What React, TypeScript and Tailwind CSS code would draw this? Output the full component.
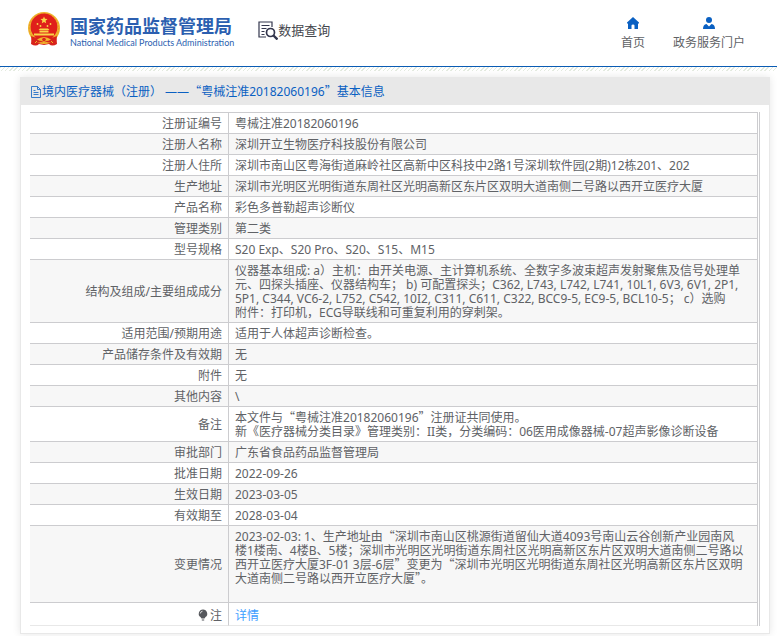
import type { ReactNode } from "react";

type Row = {
  label: string;
  value: string;
};

const rows: Row[] = [
  { label: "注册证编号", value: "粤械注准20182060196" },
  { label: "注册人名称", value: "深圳开立生物医疗科技股份有限公司" },
  { label: "注册人住所", value: "深圳市南山区粤海街道麻岭社区高新中区科技中2路1号深圳软件园(2期)12栋201、202" },
  { label: "生产地址", value: "深圳市光明区光明街道东周社区光明高新区东片区双明大道南侧二号路以西开立医疗大厦" },
  { label: "产品名称", value: "彩色多普勒超声诊断仪" },
  { label: "管理类别", value: "第二类" },
  { label: "型号规格", value: "S20 Exp、S20 Pro、S20、S15、M15" },
  {
    label: "结构及组成/主要组成成分",
    value:
      "仪器基本组成: a）主机：由开关电源、主计算机系统、全数字多波束超声发射聚焦及信号处理单\n元、四探头插座、仪器结构车； b) 可配置探头；C362, L743, L742, L741, 10L1, 6V3, 6V1, 2P1,\n5P1, C344, VC6-2, L752, C542, 10I2, C311, C611, C322, BCC9-5, EC9-5, BCL10-5； c）选购\n附件：打印机，ECG导联线和可重复利用的穿刺架。",
  },
  { label: "适用范围/预期用途", value: "适用于人体超声诊断检查。" },
  { label: "产品储存条件及有效期", value: "无" },
  { label: "附件", value: "无" },
  { label: "其他内容", value: "\\" },
  {
    label: "备注",
    value:
      "本文件与“粤械注准20182060196”注册证共同使用。\n新《医疗器械分类目录》管理类别：II类，分类编码：06医用成像器械-07超声影像诊断设备",
  },
  { label: "审批部门", value: "广东省食品药品监督管理局" },
  { label: "批准日期", value: "2022-09-26" },
  { label: "生效日期", value: "2023-03-05" },
  { label: "有效期至", value: "2028-03-04" },
  {
    label: "变更情况",
    value:
      "2023-02-03: 1、生产地址由“深圳市南山区桃源街道留仙大道4093号南山云谷创新产业园南风\n楼1楼南、4楼B、5楼；深圳市光明区光明街道东周社区光明高新区东片区双明大道南侧二号路以\n西开立医疗大厦3F-01 3层-6层”变更为“深圳市光明区光明街道东周社区光明高新区东片区双明\n大道南侧二号路以西开立医疗大厦”。\n\n",
  },
];

// Curly quotes are full width in Chinese text, so they take the CJK font
const CnText = ({ children }: { children: string }) => (
  <>
    {children.split(/([“”])/).map((part, i) =>
      part === "“" || part === "”" ? (
        <span key={i} className="font-['Noto_Sans_CJK_SC',sans-serif] leading-none">
          {part}
        </span>
      ) : (
        part
      )
    )}
  </>
);

const Emblem = () => (
  <svg viewBox="0 0 34 36" className="w-[34px] h-9 shrink-0" aria-hidden="true">
    <path d="M5 23 L4 33 Q9 36 12 33 L17 34 L22 33 Q25 36 30 33 L29 23 Z" fill="#d8231c" />
    <circle cx="17" cy="17" r="16" fill="#f0b62c" />
    <circle cx="17" cy="17" r="14.6" fill="none" stroke="#e9982a" strokeWidth="1" strokeDasharray="2 1.4" />
    <circle cx="17" cy="16" r="13.4" fill="#e0201b" />
    <path d="M17 5.500l1 2.300 2.500.2-1.900 1.700.6 2.500-2.200-1.300-2.200 1.300.6-2.500-1.900-1.700 2.500-.2z" fill="#f8d648" />
    <g fill="#f8d648">
      <circle cx="10.500" cy="13" r=".9" />
      <circle cx="13.500" cy="15" r=".9" />
      <circle cx="20.500" cy="15" r=".9" />
      <circle cx="23.500" cy="13" r=".9" />
      <path d="M11.500 19l1.500-1.500h8l1.500 1.500zM12.500 19.500h9v2h-9zM7 22.500h20v2H7z" />
    </g>
    <path d="M4 25q7 3 13 0q6 3 13 0l-1 6q-6 2-12-1q-6 3-12 1z" fill="#d8231c" />
    <path d="M10 28.500q3.500-2.500 7-2.500t7 2.500q-3 2-7 1.500q-4 .5-7-1.500z" fill="#f0b62c" />
    <circle cx="17" cy="28.500" r="1.800" fill="#d8231c" />
    <path d="M8 32l2-2M26 32l-2-2" stroke="#f0b62c" />
  </svg>
);

const SearchDocIcon = () => (
  <svg viewBox="0 0 20 20" className="w-5 h-5 shrink-0" fill="none" stroke="#33364d" aria-hidden="true">
    <path d="M14 7V2H1V17H8" strokeWidth="1.200" />
    <path d="M3.500 5.500h8M3.500 8.500h5M3.500 11.500h3M3.500 14.500h3" strokeWidth="1" />
    <circle cx="12.500" cy="12.500" r="4" strokeWidth="1.700" />
    <path d="M15.500 15.500L19.500 19.500" strokeWidth="2.400" />
  </svg>
);

const HomeIcon = () => (
  <svg viewBox="0 0 12 12" className="w-3 h-3" fill="#0a60c2" aria-hidden="true">
    <path d="M6 0L0 5.500V6.500H1V12H4.500V8.500Q4.500 7.500 6 7.500T7.500 8.500V12H11V6.500H12V5.500z" />
  </svg>
);

const UserIcon = () => (
  <svg viewBox="0 0 12 12" className="w-3 h-3" fill="#0a60c2" aria-hidden="true">
    <circle cx="6" cy="3" r="3" />
    <path d="M3.500 7L6 9.500L8.500 7Q12 7.500 12 12H0Q0 7.500 3.500 7z" />
  </svg>
);

const DocIcon = () => (
  <svg viewBox="0 0 12 12" className="w-3 h-3 shrink-0" fill="none" stroke="#0a60c2" strokeWidth=".8" aria-hidden="true">
    <path d="M1.500 .5H7.500L10.500 3.500V11.500H1.500zM7.500 .5V3.500H10.500M3.500 4.500H5.500M3.500 6.500H8.500M3.500 8.500H8.500" />
  </svg>
);

const BulbIcon = () => (
  <svg viewBox="0 0 10 12" className="w-[10px] h-3 inline-block align-[-1px]" aria-hidden="true">
    <path d="M5 0.500a4.200 4.200 0 0 1 2.500 7.600L6.500 9.500h-3L2.500 8.100A4.200 4.200 0 0 1 5 .5zM3.800 10.500h2.400v1H3.800z" fill="#55575c" />
    <path d="M2.300 4.500Q2.500 2.500 4.500 2.200" fill="none" stroke="#fff" strokeWidth=".8" />
  </svg>
);

const NavLink = ({ icon, label }: { icon: ReactNode; label: string }) => (
  <a href="#" className="flex flex-col items-center gap-1 text-xs leading-5 text-[#606266]">
    {icon}
    {label}
  </a>
);

const cell = "border-b border-[#cccccf] pt-1 pb-0.5 px-1.5";

const App = () => {
  return (
    <div className="bg-white font-['Noto_Sans','Noto_Sans_CJK_SC',sans-serif] text-[#606266]">
      <header className="flex items-start justify-between border-b border-[#0a5cb4] pl-[27px] pr-8 h-[67px]">
        <div className="flex items-start">
          <a href="#" className="flex items-start gap-[9px] pt-[11px] text-[#2c5fb0]">
            <Emblem />
            <span className="flex flex-col whitespace-nowrap pt-1">
              <span className="text-lg leading-[22px] font-bold">国家药品监督管理局</span>
              <span className="font-['Lato',sans-serif] text-[9px] leading-3">
                National Medical Products Administration
              </span>
            </span>
          </a>
          <a href="#" className="flex items-center pt-5 pl-6 text-[13px] leading-5 text-[#45474d] whitespace-nowrap">
            <SearchDocIcon />
            数据查询
          </a>
        </div>
        <nav className="flex gap-7 pt-[17px] whitespace-nowrap">
          <NavLink icon={<HomeIcon />} label="首页" />
          <NavLink icon={<UserIcon />} label="政务服务门户" />
        </nav>
      </header>
      <div className="h-1 bg-[repeating-linear-gradient(135deg,#e4ebe0_0_1px,#ffffff_1px_3px)]" />

      <main className="mt-1.5 mb-[2px] ml-5 mr-[7px] border border-t-0 border-[#e8e8e8] shadow-[0_0_8px_rgba(0,0,0,0.1)]">
        <h1 className="flex items-center bg-[#e8e8e8] h-7 pt-0.5 pl-[9px] text-xs text-[#0a60c2]">
          <DocIcon />
          <span>
            <CnText>境内医疗器械（注册） ——“粤械注准20182060196”基本信息</CnText>
          </span>
        </h1>
        <div className="pt-[7px] pb-[7px] px-[9px]">
          <div className="border-r border-[#cccccf] pr-px">
            <table className="w-full border-separate border-spacing-0 border-t border-r border-[#cccccf] text-xs leading-[14px]">
              <tbody>
                {rows.map((row) => (
                  <tr key={row.label} className="even:bg-[#f7f7f7]">
                    <th scope="row" className={`${cell} w-[199px] border-r text-right font-normal`}>
                      {row.label}
                    </th>
                    <td className={`${cell} whitespace-pre-line`}>
                      <CnText>{row.value}</CnText>
                    </td>
                  </tr>
                ))}
                <tr>
                  <th scope="row" className="border-b border-r border-b-[#e8e8e8] border-r-[#cccccf] pt-1.5 pb-0.5 px-1.5 text-right font-normal">
                    <BulbIcon />
                    <span className="pl-[2px]">注</span>
                  </th>
                  <td className="border-b border-[#e8e8e8] pt-1.5 pb-0.5 px-1.5">
                    <a href="#" className="text-[#409eff]">
                      详情
                    </a>
                  </td>
                </tr>
              </tbody>
            </table>
          </div>
        </div>
      </main>
    </div>
  );
};

export default App;
